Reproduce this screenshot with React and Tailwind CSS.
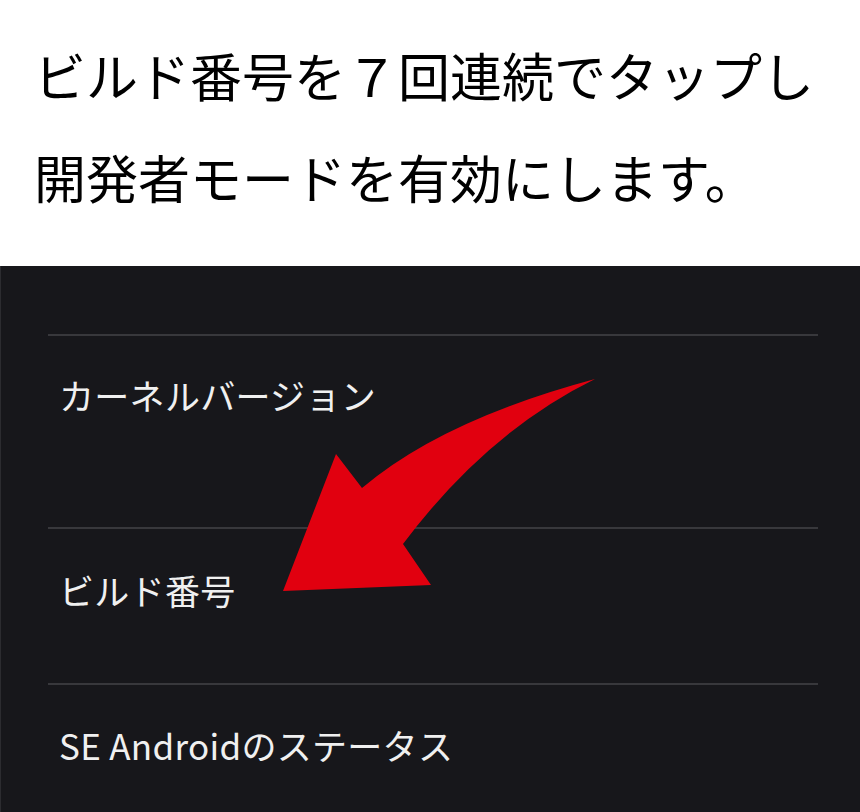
import React from "react";

const jp = { fontFamily: '"Noto Sans CJK JP", "Noto Sans", sans-serif' };

function Arrow() {
  return (
    <svg
      className="absolute left-0 top-0 pointer-events-none"
      width="860"
      height="812"
      viewBox="0 0 860 812"
    >
      <path
        d="M595 379 Q487 432 403 544 L431 585 L283 591 L336 454 L362 488 Q442 420 595 379 Z"
        fill="#e1000f"
      />
    </svg>
  );
}

function Row({ label, height, textTop }) {
  return (
    <div className={`border-t-2 border-[#38383c] ${height}`}>
      <div className={`${textTop} pl-[11px] text-[35px] leading-none text-[#f0f0f0] tracking-[0.3px]`} style={jp}>
        {label}
      </div>
    </div>
  );
}

export default function App() {
  return (
    <div className="relative w-[860px] h-[812px] overflow-hidden bg-white">
      {/* caption */}
      <div className="h-[266px] pt-[24px] pl-[34px] text-[52px] leading-[102px] text-black" style={jp}>
        <div>ビルド番号を７回連続でタップし</div>
        <div>開発者モードを有効にします。</div>
      </div>

      {/* settings list */}
      <div className="h-[546px] bg-[#17171b] border-l border-[#2c2c30] pt-[68px] pl-[47px] pr-[42px]">
        <Row label="カーネルバージョン" height="h-[193px]" textTop="pt-[41px]" />
        <Row label="ビルド番号" height="h-[156px]" textTop="pt-[43px]" />
        <Row label="SE Androidのステータス" height="h-[128px]" textTop="pt-[42px]" />
      </div>

      <Arrow />
    </div>
  );
}
